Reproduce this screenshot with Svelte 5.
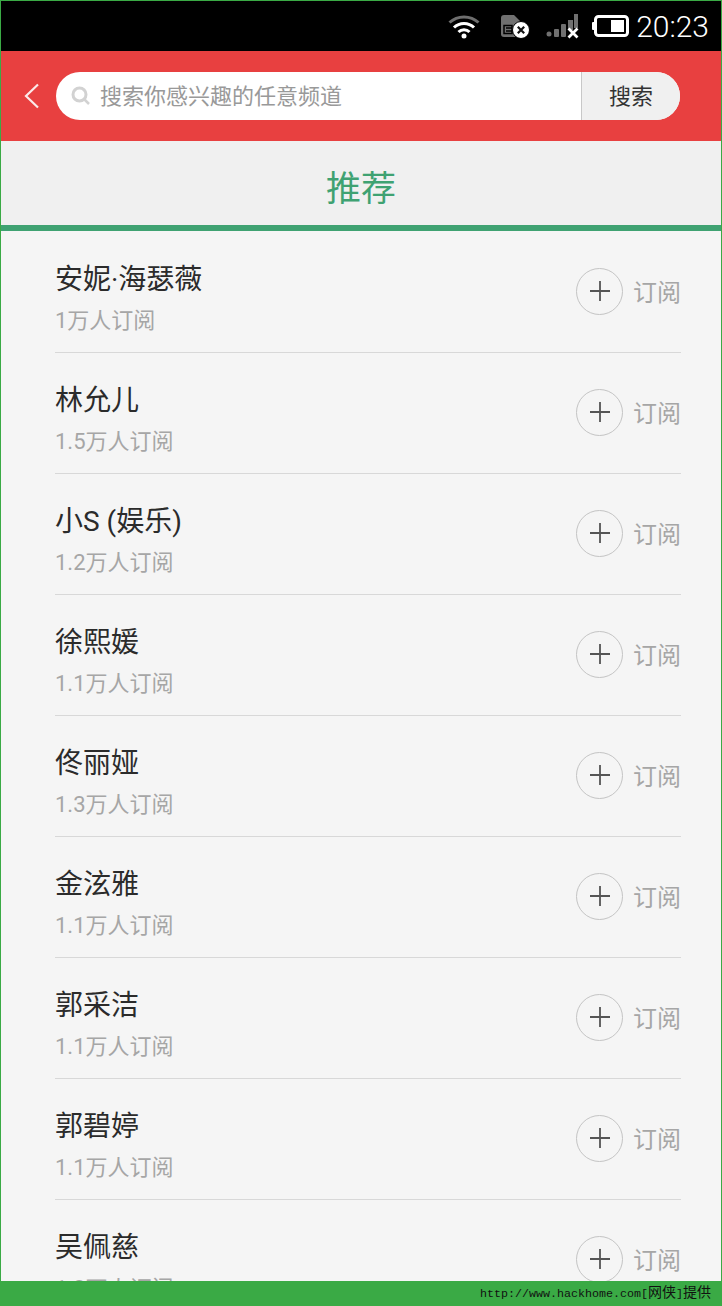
<script>
  const channels = [
    { name: '安妮·海瑟薇', subs: '1万人订阅' },
    { name: '林允儿', subs: '1.5万人订阅' },
    { name: '小S (娱乐)', subs: '1.2万人订阅' },
    { name: '徐熙媛', subs: '1.1万人订阅' },
    { name: '佟丽娅', subs: '1.3万人订阅' },
    { name: '金泫雅', subs: '1.1万人订阅' },
    { name: '郭采洁', subs: '1.1万人订阅' },
    { name: '郭碧婷', subs: '1.1万人订阅' },
    { name: '吴佩慈', subs: '1.3万人订阅' }
  ]
</script>

<div class="page">
  <div class="status">
    <svg class="wifi" width="32" height="26" viewBox="0 0 32 26">
      <path d="M1.500 9.500C9.500 2 22.500 2 30.500 9.500" fill="none" stroke="#6e6e6e" stroke-width="3"/>
      <path d="M6 14.500C11.500 9 20.500 9 26 14.500" fill="none" stroke="#fff" stroke-width="3"/>
      <path d="M10.500 19C13.500 16 18.500 16 21.500 19" fill="none" stroke="#fff" stroke-width="3"/>
      <circle cx="16" cy="23" r="2.500" fill="#fff"/>
    </svg>
    <svg class="sim" width="29" height="26" viewBox="0 0 29 26">
      <path d="M0 5a3 3 0 0 1 3-3h10l6 6v16H3a3 3 0 0 1-3-3z" fill="#707070"/>
      <path d="M3 12.500h8v8H3z" fill="none" stroke="#000" stroke-width="1.500"/>
      <path d="M5 15h6M5 18h6" stroke="#000" stroke-width="1.500"/>
      <circle cx="20" cy="17" r="8.500" fill="#fff" stroke="#000" stroke-width="1"/>
      <path d="M16.800 13.800l6.400 6.400M23.200 13.800l-6.400 6.400" stroke="#111" stroke-width="2.200"/>
    </svg>
    <svg class="signal" width="34" height="26" viewBox="0 0 34 26">
      <circle cx="3" cy="21" r="2.500" fill="#707070"/>
      <rect x="8" y="16" width="5" height="8" rx="1" fill="#707070"/>
      <rect x="15" y="11" width="5" height="13" rx="1" fill="#707070"/>
      <rect x="22" y="7" width="5" height="10" fill="#707070"/>
      <rect x="28" y="1" width="4" height="14" fill="#707070"/>
      <path d="M22.500 15.500l9 9M31.500 15.500l-9 9" stroke="#fff" stroke-width="2.800"/>
    </svg>
    <svg class="battery" width="37" height="22" viewBox="0 0 37 22">
      <rect x="0" y="7" width="3" height="8" rx="1" fill="#fff"/>
      <rect x="3.500" y="1.500" width="32" height="19" rx="3" fill="none" stroke="#fff" stroke-width="3"/>
      <rect x="19" y="5" width="13" height="12" fill="#fff"/>
    </svg>
    <span class="time">20:23</span>
  </div>

  <div class="searchbar">
    <svg class="back" width="18" height="28" viewBox="0 0 18 28">
      <path d="M15 2.500L3 14l12 11.500" fill="none" stroke="#fbeaea" stroke-width="2.200"/>
    </svg>
    <div class="search">
      <svg class="glass" width="20" height="20" viewBox="0 0 20 20">
        <circle cx="8.500" cy="8.500" r="6.500" fill="none" stroke="#d2d2d2" stroke-width="3"/>
        <path d="M13.500 13.500l4.500 4.500" stroke="#d2d2d2" stroke-width="2.500"/>
      </svg>
      <span class="placeholder">搜索你感兴趣的任意频道</span>
      <span class="search-btn">搜索</span>
    </div>
  </div>

  <div class="tab">推荐</div>

  <div class="list">
    {#each channels as channel}
      <div class="row">
        <div class="info">
          <div class="name">{channel.name}</div>
          <div class="subs">{channel.subs}</div>
        </div>
        <div class="plus">
          <svg width="20" height="20" viewBox="0 0 20 20">
            <path d="M10 0v20M0 10h20" stroke="#555" stroke-width="1.800"/>
          </svg>
        </div>
        <span class="sub-label">订阅</span>
      </div>
    {/each}
  </div>

  <div class="footer"><span class="ascii">http://www.hackhome.com[</span>网侠<span class="ascii">]</span>提供</div>
</div>

<style>
  :global(body) { margin: 0; }
  .page { width: 722px; height: 1306px; box-sizing: border-box; display: flex; flex-direction: column; overflow: hidden; border: 1px solid #3aaa45; border-bottom: none; background: #f5f5f5; font-family: Roboto, "Noto Sans CJK SC", sans-serif; }

  .status { height: 50px; flex-shrink: 0; background: #000; display: flex; align-items: center; padding-right: 12px; }
  .wifi { margin-left: auto; }
  .sim { margin-left: 21px; }
  .signal { margin-left: 16px; }
  .battery { margin-left: 12px; }
  .time { margin-left: 7px; font-family: Roboto, sans-serif; font-weight: 300; font-size: 30px; color: #fff; }

  .searchbar { height: 90px; flex-shrink: 0; background: #e84040; display: flex; align-items: center; padding: 0 41px 0 22px; }
  .back { flex-shrink: 0; }
  .search { margin-left: 15px; flex: 1; height: 48px; border-radius: 24px; background: #fff; display: flex; align-items: center; overflow: hidden; }
  .glass { margin-left: 15px; flex-shrink: 0; }
  .placeholder { margin-left: 9px; flex: 1; font-size: 22px; color: #999; padding-bottom: 4px; }
  .search-btn { width: 99px; height: 48px; line-height: 49px; box-sizing: border-box; border-left: 1px solid #c8c8c8; background: #f0f0f0; text-align: center; font-size: 22px; color: #333; }

  .tab { height: 80px; padding-top: 4px; flex-shrink: 0; background: #f0f0f0; border-bottom: 6px solid #3fa272; display: flex; align-items: center; justify-content: center; font-size: 35px; color: #3fa272; }

  .list { flex: 1; min-height: 0; overflow: hidden; padding-top: 1px; }
  .row { height: 118px; padding-bottom: 2px; margin: 0 40px 0 54px; border-bottom: 1px solid #d8d8d8; display: flex; align-items: center; }
  .info { flex: 1; margin-top: 15px; }
  .name { font-size: 28px; line-height: 38px; color: #2b2b2b; }
  .subs { font-size: 22px; line-height: 32px; margin-top: 6px; color: #a6a6a6; }
  .plus { width: 47px; height: 47px; box-sizing: border-box; border: 1px solid #c4c4c4; border-radius: 50%; display: flex; align-items: center; justify-content: center; }
  .sub-label { margin-left: 10px; margin-bottom: 2px; font-size: 24px; color: #a6a6a6; }

  .footer { height: 25px; flex-shrink: 0; background: #3aaa45; color: #111; font-family: "Noto Sans CJK SC", sans-serif; font-size: 14px; line-height: 21px; text-align: right; padding-right: 10px; }
  .ascii { font-family: "Liberation Mono", monospace; font-size: 11.670px; }
</style>
